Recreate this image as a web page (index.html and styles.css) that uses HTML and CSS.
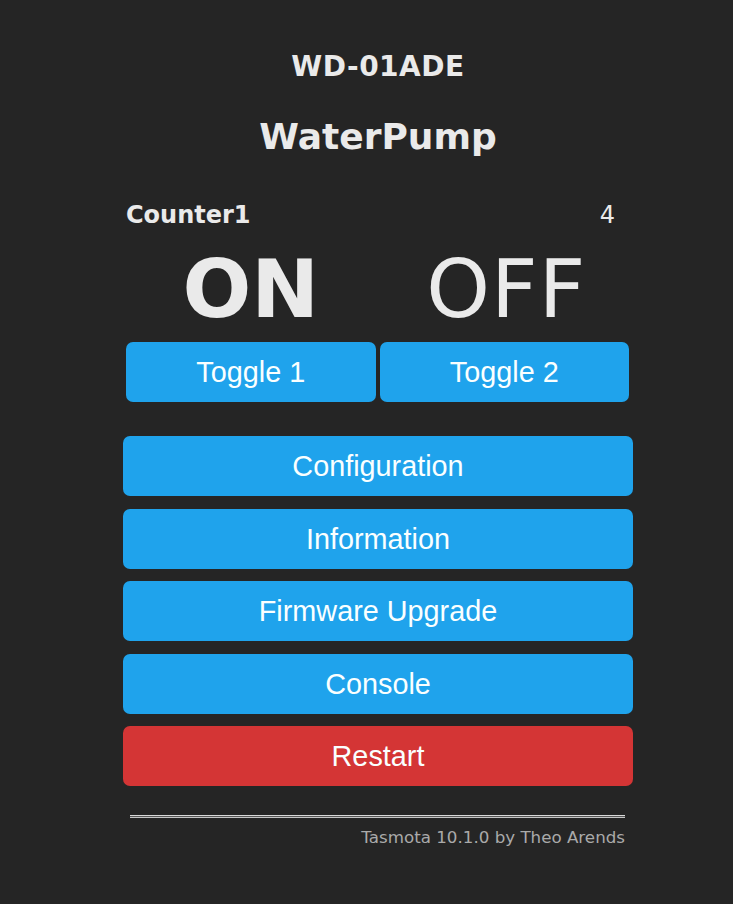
FILE: index.html
```html
<!DOCTYPE html>
<html>
<head>
<meta charset="utf-8">
<title>WD-01ADE - WaterPump</title>
<link rel="stylesheet" href="styles.css">
</head>
<body>
<div class="wrap">
  <h3 class="device">WD-01ADE</h3>
  <h2 class="name">WaterPump</h2>
  <div class="sensor">
    <span class="sensor-label">Counter1</span>
    <span class="sensor-value">4</span>
  </div>
  <div class="states">
    <div class="state on">ON</div>
    <div class="state off">OFF</div>
  </div>
  <div class="toggles">
    <button class="btn">Toggle 1</button>
    <button class="btn">Toggle 2</button>
  </div>
  <div class="menu">
    <button class="btn">Configuration</button>
    <button class="btn">Information</button>
    <button class="btn">Firmware Upgrade</button>
    <button class="btn">Console</button>
    <button class="btn btn-red">Restart</button>
  </div>
  <div class="rule"></div>
  <div class="footer">Tasmota 10.1.0 by Theo Arends</div>
</div>
</body>
</html>
```
FILE: styles.css
```css
html, body {
  margin: 0;
  padding: 0;
  background: #252525;
}
body {
  font-family: "DejaVu Sans", Verdana, sans-serif;
  color: #eaeaea;
  height: 904px;
}
.wrap {
  width: 510px;
  margin-left: 123px;
  padding-top: 50px;
}
.device {
  margin: 0;
  font-size: 28px;
  line-height: 34px;
  font-weight: bold;
  letter-spacing: 0.5px;
  text-align: center;
}
.name {
  margin: 31px 0 0;
  font-size: 36px;
  line-height: 44px;
  font-weight: bold;
  text-align: center;
}
.sensor {
  margin: 41px 4px 0 3px;
  display: flex;
  justify-content: space-between;
  font-size: 24px;
  line-height: 30px;
}
.sensor-label {
  font-weight: bold;
}
.sensor-value {
  padding-right: 14px;
}
.states {
  margin: 11px 4px 0 3px;
  display: grid;
  grid-template-columns: 1fr 1fr;
  column-gap: 4px;
  font-size: 81px;
  line-height: 96px;
  text-align: center;
}
.on {
  font-weight: bold;
}
.off {
  font-weight: normal;
  letter-spacing: 1px;
  padding-left: 4px;
}
.toggles {
  margin: 5px 4px 0 3px;
  display: grid;
  grid-template-columns: 1fr 1fr;
  column-gap: 4px;
}
.btn {
  display: block;
  width: 100%;
  height: 60px;
  border: 0;
  border-radius: 7px;
  background: #1fa3ec;
  color: #faffff;
  font-family: "Liberation Sans", Arial, sans-serif;
  font-size: 28.8px;
  line-height: 60px;
  padding: 0;
  text-align: center;
}
.btn-red {
  background: #d43535;
}
.menu {
  margin-top: 34px;
  display: flex;
  flex-direction: column;
  gap: 12.5px;
}
.rule {
  margin: 29px 8px 0 7px;
  height: 1px;
  background: #555;
  border-top: 1px solid #d8d8d8;
  border-bottom: 1px solid #c4c4c4;
}
.footer {
  margin: 9px 8px 0 7px;
  text-align: right;
  font-size: 16.7px;
  line-height: 20px;
  color: #aaa;
}
```
